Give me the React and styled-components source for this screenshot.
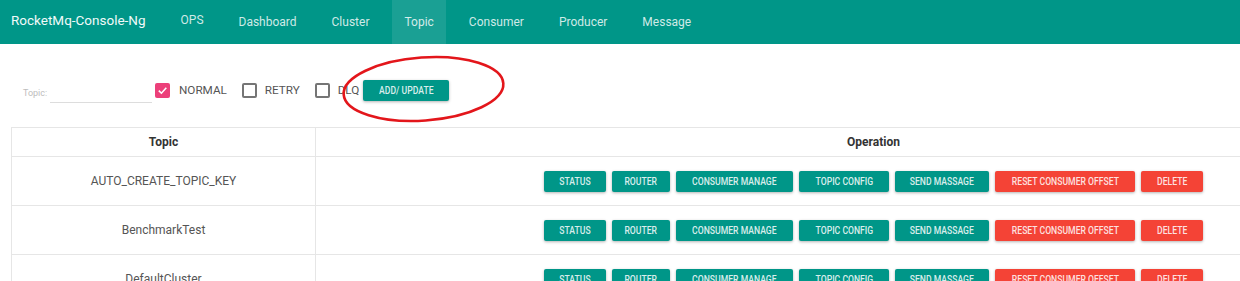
import React from 'react';
import styled, { createGlobalStyle } from 'styled-components';

const GlobalStyle = createGlobalStyle`
  html, body { margin: 0; padding: 0; overflow: hidden; background: #fff; }
  body { font-family: Roboto, "Liberation Sans", Arial, sans-serif; }
`;

const Page = styled.div`
  position: relative;
  width: 1240px;
`;

const Header = styled.header`
  height: 44px;
  background: #009688;
  display: flex;
  align-items: stretch;
`;

const Brand = styled.div`
  display: flex;
  align-items: center;
  padding: 0 0 5px 11px;
  margin-right: 23px;
  font-size: 13.5px;
  color: #f1faf9;
  white-space: nowrap;
`;

const Nav = styled.nav`
  display: flex;
  gap: 11px;
`;

const NavItem = styled.a`
  display: flex;
  align-items: center;
  padding: 0 12px ${p => (p.$raised ? '4px' : '0')};
  font-size: 12px;
  color: rgba(255, 255, 255, 0.82);
  background: ${p => (p.$active ? 'rgba(255,255,255,0.1)' : 'transparent')};
  cursor: pointer;
  white-space: nowrap;
`;

const Main = styled.main`
  padding: 26px 0 0 11px;
`;

const FilterRow = styled.div`
  display: flex;
  align-items: center;
  height: 40px;
  padding-left: 12px;
`;

const TopicField = styled.div`
  display: flex;
  align-items: flex-end;
  height: 26px;
`;

const FieldLabel = styled.span`
  font-size: 9px;
  color: #bdbdbd;
  padding-bottom: 5px;
  width: 24px;
`;

const FieldInput = styled.input`
  margin-left: 3px;
  width: 102px;
  height: 20px;
  padding: 0;
  border: none;
  border-bottom: 1px solid #ddd;
  outline: none;
  background: transparent;
`;

const CheckGroup = styled.div`
  display: flex;
  align-items: center;
  gap: 15px;
  margin-left: 3px;
`;

const CheckLabel = styled.label`
  display: flex;
  align-items: center;
  gap: ${p => p.$gap || 9}px;
  font-size: 11.7px;
  color: #555;
  white-space: nowrap;
`;

const Box = styled.span`
  width: 15px;
  height: 15px;
  box-sizing: border-box;
  border-radius: 2px;
  display: flex;
  align-items: center;
  justify-content: center;
  background: ${p => (p.$checked ? '#ec407a' : 'transparent')};
  border: ${p => (p.$checked ? 'none' : '2px solid #757575')};
`;

const Button = styled.button`
  width: ${p => p.$w}px;
  height: 21px;
  padding: 0;
  border: none;
  border-radius: 2px;
  background: ${p => (p.$danger ? '#f44336' : '#009688')};
  color: rgba(255, 255, 255, 0.86);
  font-family: Roboto, "Liberation Sans", Arial, sans-serif;
  font-size: 11.5px;
  font-weight: 500;
  box-shadow: 0 1px 3px rgba(0, 0, 0, 0.3);
  display: flex;
  align-items: center;
  justify-content: center;
  overflow: visible;
  cursor: pointer;
`;

const AddButton = styled(Button)`
  margin-left: 4px;
`;

const Narrow = styled.span`
  display: inline-block;
  transform: scaleX(0.75);
  white-space: nowrap;
`;

const Circle = styled.svg`
  position: absolute;
  left: 338px;
  top: 52px;
  pointer-events: none;
`;

const Table = styled.table`
  margin-top: 17px;
  width: 1421px;
  border-collapse: collapse;
  table-layout: fixed;
  font-size: 12px;
  color: #555;
`;

const Th = styled.th`
  height: 28px;
  padding: 0;
  border: 1px solid #e6e6e6;
  font-weight: 700;
  color: #333;
  text-align: center;
  width: ${p => (p.$w ? `${p.$w}px` : 'auto')};
`;

const Td = styled.td`
  height: 48px;
  padding: 0;
  border: 1px solid #e6e6e6;
  text-align: center;
`;

const Actions = styled.div`
  display: flex;
  justify-content: center;
  gap: 6px;
`;

const navItems = ['OPS', 'Dashboard', 'Cluster', 'Topic', 'Consumer', 'Producer', 'Message'];

const actions = [
  { label: 'STATUS', w: 62 },
  { label: 'ROUTER', w: 58 },
  { label: 'CONSUMER MANAGE', w: 117 },
  { label: 'TOPIC CONFIG', w: 90 },
  { label: 'SEND MASSAGE', w: 94 },
  { label: 'RESET CONSUMER OFFSET', w: 140, danger: true },
  { label: 'DELETE', w: 62, danger: true },
];

const topics = ['AUTO_CREATE_TOPIC_KEY', 'BenchmarkTest', 'DefaultCluster'];

const Check = () => (
  <svg width="11" height="11" viewBox="0 0 11 11">
    <path d="M1.8 5.6 L4.4 8.2 L9.3 2.8" fill="none" stroke="#fff" strokeWidth="1.6" />
  </svg>
);

export default function App() {
  return (
    <Page>
      <GlobalStyle />
      <Header>
        <Brand>RocketMq-Console-Ng</Brand>
        <Nav>
          {navItems.map(n => (
            <NavItem key={n} $active={n === 'Topic'} $raised={n === 'OPS'}>
              {n}
            </NavItem>
          ))}
        </Nav>
      </Header>
      <Main>
        <FilterRow>
          <TopicField>
            <FieldLabel>Topic:</FieldLabel>
            <FieldInput type="text" />
          </TopicField>
          <CheckGroup>
            <CheckLabel>
              <Box $checked>
                <Check />
              </Box>
              NORMAL
            </CheckLabel>
            <CheckLabel $gap={8}>
              <Box />
              RETRY
            </CheckLabel>
            <CheckLabel $gap={8}>
              <Box />
              DLQ
            </CheckLabel>
          </CheckGroup>
          <AddButton $w={86}>
            <Narrow>ADD/ UPDATE</Narrow>
          </AddButton>
        </FilterRow>
        <Table>
          <thead>
            <tr>
              <Th $w={303}>Topic</Th>
              <Th>Operation</Th>
            </tr>
          </thead>
          <tbody>
            {topics.map(t => (
              <tr key={t}>
                <Td>{t}</Td>
                <Td>
                  <Actions>
                    {actions.map(a => (
                      <Button key={a.label} $w={a.w} $danger={a.danger}>
                        <Narrow>{a.label}</Narrow>
                      </Button>
                    ))}
                  </Actions>
                </Td>
              </tr>
            ))}
          </tbody>
        </Table>
      </Main>
      <Circle width="172" height="74" viewBox="0 0 172 74">
        <ellipse
          cx="85.5"
          cy="37"
          rx="80"
          ry="31.5"
          fill="none"
          stroke="#e3161b"
          strokeWidth="2.6"
          transform="rotate(-4 85.5 37)"
        />
      </Circle>
    </Page>
  );
}
